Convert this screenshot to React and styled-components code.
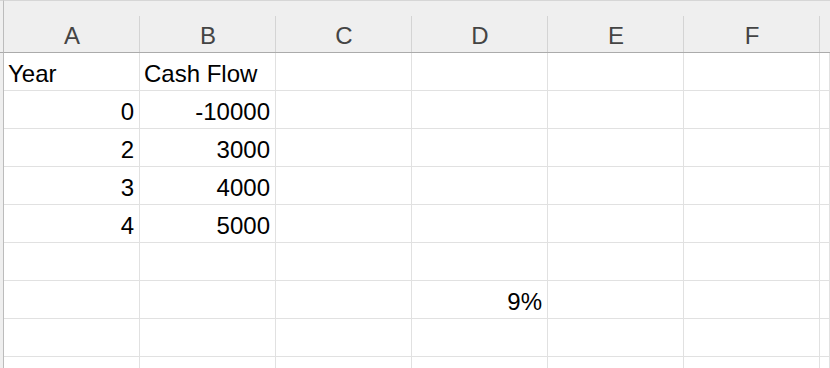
import { Fragment } from "react";
import styled, { createGlobalStyle } from "styled-components";

const GlobalStyle = createGlobalStyle`
  html, body {
    margin: 0;
    padding: 0;
    background: #ffffff;
    overflow: hidden;
  }
  body {
    font-family: "Liberation Sans", Arial, sans-serif;
  }
`;

const columns = ["A", "B", "C", "D", "E", "F", ""];

// each row: value + alignment per column
const rows = [
  [{ v: "Year" }, { v: "Cash Flow" }],
  [{ v: "0", n: true }, { v: "-10000", n: true }],
  [{ v: "2", n: true }, { v: "3000", n: true }],
  [{ v: "3", n: true }, { v: "4000", n: true }],
  [{ v: "4", n: true }, { v: "5000", n: true }],
  [],
  [null, null, null, { v: "9%", n: true }],
  [],
  [],
];

const Sheet = styled.div`
  display: grid;
  grid-template-columns: 4px repeat(6, 136px) 1fr;
  width: 830px;
  height: 368px;
  overflow: hidden;
  grid-auto-rows: 38px;
  grid-template-rows: 53px;
`;

const Corner = styled.div`
  background: #efefef;
  border-top: 1px solid #d6d6d6;
  border-right: 1px solid #bcbcbc;
  border-bottom: 1px solid #ababab;
  box-sizing: border-box;
`;

const RowStub = styled.div`
  background: #efefef;
  border-right: 1px solid #bcbcbc;
  box-sizing: border-box;
`;

const ColHead = styled.div`
  position: relative;
  box-sizing: border-box;
  background: #efefef;
  border-top: 1px solid #d6d6d6;
  border-bottom: 1px solid #ababab;
  display: flex;
  align-items: flex-end;
  justify-content: center;
  padding-bottom: 3px;
  font-size: 24px;
  line-height: 27px;
  color: #444444;

  &::after {
    content: "";
    position: absolute;
    top: 15px;
    right: 0;
    bottom: 0;
    width: 1px;
    background: ${(p) => (p.$last ? "transparent" : "#d4d4d4")};
  }
`;

const Cell = styled.div`
  box-sizing: border-box;
  border-right: 1px solid #e1e1e1;
  border-bottom: 1px solid #e1e1e1;
  display: flex;
  align-items: flex-end;
  justify-content: ${(p) => (p.$num ? "flex-end" : "flex-start")};
  padding: 0 5px 3px 4px;
  font-size: 24px;
  line-height: 27px;
  color: #000000;
  white-space: nowrap;
`;

export default function App() {
  return (
    <>
      <GlobalStyle />
      <Sheet>
        <Corner />
        {columns.map((c, i) => (
          <ColHead key={"h" + i} $last={i === columns.length - 1}>
            {c}
          </ColHead>
        ))}
        {rows.map((row, r) => (
          <Fragment key={"r" + r}>
            <RowStub />
            {columns.map((_, c) => {
              const cell = row[c];
              return (
                <Cell key={c} $num={cell && cell.n}>
                  {cell ? cell.v : ""}
                </Cell>
              );
            })}
          </Fragment>
        ))}
      </Sheet>
    </>
  );
}
